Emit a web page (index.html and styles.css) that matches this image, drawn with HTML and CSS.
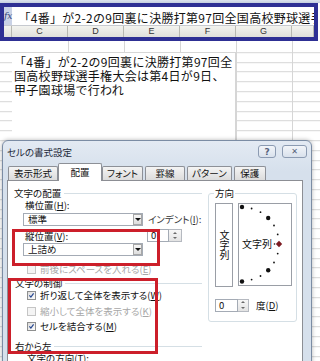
FILE: index.html
```html
<!DOCTYPE html>
<html lang="ja">
<head>
    <meta charset="UTF-8" />
    <meta name="viewport" content="width=device-width, initial-scale=1.0" />
    <title>セルの書式設定</title>
    <link rel="stylesheet" href="styles.css">
</head>
<body>
    <div class="toolbar"></div>
    <div class="focus">
        <div class="formula-bar">
            <span class="fx">fx</span>
            <span class="formula-text">「4番」が2-2の9回裏に決勝打第97回全国高校野球選手権大会は第4日が9日、甲子園球場で行われ</span>
        </div>
        <div class="col-heads">
            <span></span><span>C</span><span>D</span><span>E</span><span>F</span><span>G</span><span></span>
        </div>
    </div>
    <div class="sheet">
        <div class="merged">「4番」が2-2の9回裏に決勝打第97回全<br>国高校野球選手権大会は第4日が9日、<br>甲子園球場で行われ</div>
    </div>

    <div class="dialog">
        <div class="title">
            <span>セルの書式設定</span>
            <span class="title-btn help">?</span>
            <span class="title-btn close">✕</span>
        </div>
        <div class="tabs">
            <span class="tab">表示形式</span>
            <span class="tab active">配置</span>
            <span class="tab">フォント</span>
            <span class="tab">罫線</span>
            <span class="tab">パターン</span>
            <span class="tab">保護</span>
        </div>
        <div class="page">
            <div class="left">
                <div class="group g-first"><span>文字の配置</span></div>
                <div class="label">横位置(<u>H</u>):</div>
                <div class="row r-select">
                    <div class="select"><span>標準</span><span class="arrow"></span></div>
                    <span class="indent-label">インデント(<u>I</u>):</span>
                </div>
                <div class="row r-valign">
                    <span class="label">縦位置(<u>V</u>):</span>
                    <span class="spin indent"><span class="spin-val">0</span><span class="spin-btn"><i class="up"></i><i class="down"></i></span></span>
                </div>
                <div class="row r-select2">
                    <div class="select"><span>上詰め</span><span class="arrow"></span></div>
                </div>
                <div class="check disabled c-space"><span class="box"></span><span>前後にスペースを入れる(<u>E</u>)</span></div>
                <div class="group g-control"><span>文字の制御</span></div>
                <div class="check c-wrap"><span class="box"><svg viewBox="0 0 9 9"><path d="M1.8 4.4 L3.7 6.6 L7.2 1.8" /></svg></span><span>折り返して全体を表示する(<u>W</u>)</span></div>
                <div class="check disabled c-shrink"><span class="box"></span><span>縮小して全体を表示する(<u>K</u>)</span></div>
                <div class="check c-merge"><span class="box"><svg viewBox="0 0 9 9"><path d="M1.8 4.4 L3.7 6.6 L7.2 1.8" /></svg></span><span>セルを結合する(<u>M</u>)</span></div>
                <div class="group g-rtl"><span>右から左</span></div>
                <div class="label l-dir">文字の方向(<u>T</u>):</div>
            </div>
            <fieldset class="direction">
                <legend>方向</legend>
                <div class="orient">
                    <div class="vertical">文字列</div>
                    <svg class="dial" width="52" height="81" viewBox="0 0 52 81">
                        <circle cx="3" cy="3" r="2.2" />
                        <circle cx="12.6" cy="4.5" r="0.9" />
                        <circle cx="21.5" cy="8.2" r="0.9" />
                        <circle cx="29.2" cy="14" r="2.2" />
                        <circle cx="35" cy="21.5" r="0.9" />
                        <circle cx="38.7" cy="30.4" r="0.9" />
                        <circle cx="35.5" cy="40" r="0.8" />
                        <polygon class="knob" points="40,36.8 43.2,40 40,43.2 36.8,40" />
                        <circle cx="38.7" cy="49.6" r="0.9" />
                        <circle cx="35" cy="58.5" r="0.9" />
                        <circle cx="29.2" cy="66.2" r="2.2" />
                        <circle cx="21.5" cy="72" r="0.9" />
                        <circle cx="12.6" cy="75.6" r="0.9" />
                        <circle cx="3" cy="77.5" r="2.2" />
                        <text x="3" y="44">文字列</text>
                    </svg>
                </div>
                <div class="degree">
                    <span class="spin deg"><span class="spin-val">0</span><span class="spin-btn"><i class="up"></i><i class="down"></i></span></span>
                    <span>度(<u>D</u>)</span>
                </div>
            </fieldset>
        </div>
    </div>

    <div class="mark mark-valign"></div>
    <div class="mark mark-control"></div>
</body>
</html>
```

FILE: styles.css
```css
body {
    margin: 0;
    width: 320px;
    height: 361px;
    overflow: hidden;
    position: relative;
    background-color: white;
    font-family: "Noto Sans CJK JP", sans-serif;
}
.toolbar {
    height: 3px;
    background: linear-gradient(#dde4ee, #c4cfdf);
}
.focus {
    border: 4px solid #2e3094;
    margin-right: 2px;
    background-color: white;
}
.formula-bar {
    height: 18px;
    display: flex;
    align-items: center;
    border-bottom: 1px solid #c6c9cf;
}
.fx {
    width: 10px;
    height: 18px;
    background-color: #c9d2e6;
    color: #34447a;
    font: italic 9px "DejaVu Serif", serif;
    display: flex;
    align-items: center;
    justify-content: center;
}
.formula-text {
    padding: 3px 0 0 6px;
    font-size: 12px;
    line-height: 14px;
    letter-spacing: 0.3px;
    white-space: nowrap;
    overflow: hidden;
    color: #111;
}
.col-heads {
    display: grid;
    grid-template-columns: 8px repeat(5, 56px) 1fr;
    height: 11px;
    background: linear-gradient(#f3f3ef, #dfe0da);
    font: 9px "Liberation Sans", sans-serif;
    color: #333;
}
.col-heads span {
    border-right: 1px solid #b7b8b1;
    text-align: center;
    line-height: 11px;
}
.sheet {
    height: 320px;
    display: grid;
    grid-template-columns: 12px 224px 1fr;
    grid-template-rows: 11px 1fr;
    background-color: white;
    background-image:
        repeating-linear-gradient(90deg, transparent 0 55px, #d6d6d6 55px 56px),
        repeating-linear-gradient(180deg, transparent 0 8.8px, #d6d6d6 8.8px 9.8px);
    background-position: 13px 0, 0 2.2px;
}
.merged {
    grid-column: 2;
    grid-row: 2;
    background-color: white;
    border-top: 1px solid #d6d6d6;
    border-right: 1px solid #d6d6d6;
    padding: 2px 0 0 2px;
    font-size: 12px;
    line-height: 14px;
    letter-spacing: 0.3px;
    color: #111;
    white-space: nowrap;
}

/* dialog */
.dialog {
    position: absolute;
    left: 2px;
    top: 140px;
    width: 310px;
    height: 240px;
    box-sizing: border-box;
    border: 1px solid #7b8ca4;
    border-radius: 6px 6px 0 0;
    background: linear-gradient(#e3eaf3, #d6e0ec 30px, #d6e0ec);
    box-shadow: 0 0 4px rgba(0, 0, 0, 0.3);
    font-size: 9.5px;
    font-feature-settings: "palt";
    color: #111;
}
.title {
    height: 21px;
    display: flex;
    align-items: center;
    padding: 0 4px;
    gap: 6px;
}
.title span:first-child {
    margin-right: auto;
    color: #1e2a3a;
}
.title-btn {
    height: 13px;
    box-sizing: border-box;
    border: 1px solid #8c9bb2;
    border-radius: 3px;
    background: linear-gradient(#f2f5f9, #d9e1ec);
    color: #56627a;
    font: bold 9px "DejaVu Sans", sans-serif;
    display: flex;
    align-items: center;
    justify-content: center;
}
.help {
    width: 18px;
}
.close {
    width: 25px;
    font-size: 8px;
}
.tabs {
    height: 18px;
    display: flex;
    align-items: flex-end;
    padding-left: 5px;
}
.tab {
    min-width: 40px;
    height: 14px;
    box-sizing: border-box;
    margin-right: 2px;
    padding: 0 4px;
    border: 1px solid #8d9097;
    border-bottom: none;
    border-radius: 2px 2px 0 0;
    background: linear-gradient(#f4f4f4, #dcdcdc);
    text-align: center;
    line-height: 13px;
}
.tab:first-child {
    min-width: 50px;
}
.tab:last-child {
    min-width: 32px;
}
.tab.active {
    height: 18px;
    margin: 0 0 -1px -2px;
    padding: 0 6px;
    min-width: 44px;
    background: white;
    position: relative;
    z-index: 1;
    line-height: 16px;
}
.page {
    margin: 0 8px 0 4px;
    height: 200px;
    background-color: white;
    border: 1px solid #8c8e94;
    display: flex;
    align-items: flex-start;
}
.left {
    width: 200px;
}
.group {
    height: 12px;
    line-height: 12px;
    display: flex;
    align-items: center;
    gap: 3px;
    margin: 0 6px 0 7px;
}
.group::after {
    content: "";
    flex: 1;
    height: 1px;
    background-color: #d5dfe5;
}
.g-first {
    margin-top: 6px;
    margin-left: 6px;
}
.g-control {
    margin-top: 2px;
}
.g-rtl {
    margin-top: 8px;
}
.label {
    height: 12px;
    line-height: 12px;
    margin-left: 17px;
}
.row {
    display: flex;
    align-items: center;
}
.r-select {
    margin: 1px 0 0 15px;
}
.r-valign {
    margin-top: 3px;
    width: 174px;
    justify-content: space-between;
}
.r-select2 {
    margin: 1px 0 0 15px;
}
.select {
    width: 120px;
    height: 13px;
    box-sizing: border-box;
    border: 1px solid #a4abb5;
    padding-left: 4px;
    display: flex;
    align-items: center;
    line-height: 11px;
}
.arrow {
    margin-left: auto;
    width: 9px;
    height: 11px;
    box-sizing: border-box;
    border: 1px solid #a7a7a7;
    background: linear-gradient(#f6f6f6, #dedede);
    display: flex;
    align-items: center;
    justify-content: center;
}
.arrow::after {
    content: "";
    border-left: 3px solid transparent;
    border-right: 3px solid transparent;
    border-top: 3px solid #111;
}
.indent-label {
    margin-left: 5px;
    color: #333;
}
.spin {
    display: flex;
    height: 13px;
}
.spin-val {
    width: 22px;
    box-sizing: border-box;
    border: 1px solid #a4abb5;
    padding-left: 3px;
    line-height: 11px;
}
.spin-btn {
    width: 12px;
    display: flex;
    flex-direction: column;
    border: 1px solid #b5b9c0;
    border-left: none;
    background: linear-gradient(#f7f7f7, #e3e3e3);
}
.spin-btn i {
    flex: 1;
    display: flex;
    align-items: center;
    justify-content: center;
}
.spin-btn .up::after {
    content: "";
    border-left: 2px solid transparent;
    border-right: 2px solid transparent;
    border-bottom: 2px solid #6a6a6a;
}
.spin-btn .down::after {
    content: "";
    border-left: 2px solid transparent;
    border-right: 2px solid transparent;
    border-top: 2px solid #6a6a6a;
}
.check {
    height: 12px;
    line-height: 12px;
    display: flex;
    align-items: center;
    gap: 4px;
    margin-left: 19px;
}
.box {
    width: 9px;
    height: 9px;
    box-sizing: border-box;
    border: 1px solid #8e8f8f;
    background: linear-gradient(135deg, #dcdcdc, #fdfdfd);
    display: flex;
}
.box svg {
    width: 7px;
    height: 7px;
}
.box path {
    fill: none;
    stroke: #24458f;
    stroke-width: 1.5;
}
.check.disabled {
    color: #a7a7a7;
}
.check.disabled .box {
    border-color: #c5c5c5;
    background: #f4f4f4;
}
.c-space {
    margin-top: 7px;
}
.c-shrink {
    margin-top: 4px;
}
.c-merge {
    margin-top: 3px;
}
.l-dir {
    margin: 0 0 0 19px;
}
.direction {
    margin: 6px 0 0 0;
    width: 89px;
    box-sizing: border-box;
    padding: 4px 4px 9px 6px;
    border: 1px solid #d5dfe5;
    border-radius: 3px;
}
.direction legend {
    padding: 0 1px;
    margin-left: -1px;
    line-height: 12px;
}
.orient {
    display: flex;
    gap: 5px;
}
.vertical {
    width: 18px;
    height: 84px;
    box-sizing: border-box;
    border: 1px solid #9a9ea6;
    writing-mode: vertical-rl;
    font-feature-settings: normal;
    font-size: 10px;
    display: flex;
    align-items: center;
    justify-content: center;
    line-height: 16px;
}
.dial {
    border: 1px solid #9a9ea6;
    width: 52px;
    height: 81px;
}
.dial circle {
    fill: #111;
}
.dial .knob {
    fill: #7c1b22;
}
.dial text {
    font-size: 10px;
    font-family: "Noto Sans CJK JP", sans-serif;
    fill: #111;
}
.degree {
    margin-top: 11px;
    display: flex;
    align-items: center;
    gap: 7px;
}
.deg .spin-val {
    width: 23px;
}
.deg .spin-btn {
    width: 10px;
}
.mark {
    position: absolute;
    box-sizing: border-box;
    border: 3px solid #cc1f2a;
}
.mark-valign {
    left: 12px;
    top: 229px;
    width: 148px;
    height: 37px;
}
.mark-control {
    left: 8px;
    top: 278px;
    width: 150px;
    height: 76px;
}
```
